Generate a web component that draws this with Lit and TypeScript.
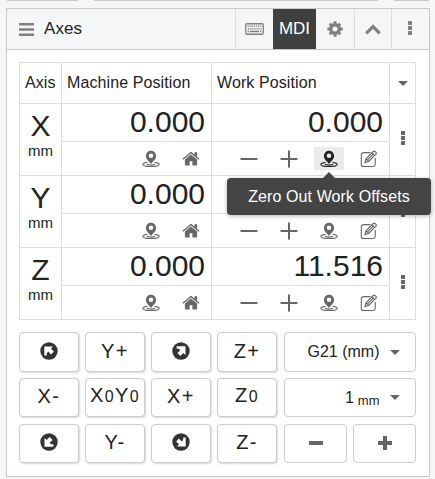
import { LitElement, html, svg, css } from "lit";
import { customElement } from "lit/decorators.js";

const pin = html`<svg class="ic" width="18" height="18" viewBox="0 0 18 18"><path fill="currentColor" fill-rule="evenodd" d="M9 .8a5.100 5.100 0 0 0-5.100 5.100C3.900 9.100 7 11 9 14.100 11 11 14.100 9.100 14.100 5.900A5.100 5.100 0 0 0 9 .8zM9 3.500a2.300 2.300 0 1 1 0 4.600 2.300 2.300 0 0 1 0-4.600z"/><path d="M5.500 12.400C2.800 12.800.8 13.500.8 14.500.8 15.700 4.300 16.500 9 16.500s8.200-.8 8.200-2c0-1-2-1.700-4.700-2.100" fill="none" stroke="currentColor" stroke-width="1.100"/><path d="M5 14.300q4 1.500 8 0" fill="none" stroke="currentColor" stroke-width="1.200"/></svg>`;
const home = html`<svg class="ic" width="18" height="16" viewBox="0 0 18 16"><path fill="currentColor" d="M9 3.400 2.900 8.500v5.300c0 .5.300.8.800.8h3.900v-4.400h2.800v4.400h3.900c.5 0 .8-.3.800-.8V8.500z"/><path fill="currentColor" d="M17.500 7.700 15.100 5.700V1.200h-2.500v2.400L10 1.400c-.6-.5-1.400-.5-2 0L.5 7.700l.8 1L9 2.400l7.700 6.300z"/></svg>`;
const minus = html`<svg class="ic" width="18" height="18" viewBox="0 0 18 18"><path fill="currentColor" d="M.5 8h17v2H.5z"/></svg>`;
const plus = html`<svg class="ic" width="18" height="18" viewBox="0 0 18 18"><path fill="currentColor" d="M.5 8H8V.5h2V8h7.500v2H10v7.500H8V10H.5z"/></svg>`;
const edit = html`<svg class="ic" width="18" height="18" viewBox="0 0 18 18" fill="none" stroke="currentColor" stroke-width="1.100"><path d="M10.500 2.600H3.600a2.300 2.300 0 0 0-2.300 2.300v9.300a2.300 2.300 0 0 0 2.300 2.300h9.300a2.300 2.300 0 0 0 2.300-2.300V8"/><path d="M5 12.500 6 8.800 13.300 1.500q.9-.8 1.800 0l.9.9q.8.900 0 1.800L8.700 11.500zM12 2.800l2.700 2.700M6 8.800l2.700 2.700M7.300 10.200l6-6"/></svg>`;
const caret = html`<svg class="caret" width="10" height="5" viewBox="0 0 10 5"><path fill="currentColor" d="M0 0h10L5 5z"/></svg>`;
const dots = html`<svg width="4" height="14" viewBox="0 0 4 14"><path fill="currentColor" d="M.5 0h3q.5 0 .5.500v3q0 .5-.5.500h-3Q0 4 0 3.500v-3Q0 0 .5 0zM.5 5h3q.5 0 .5.500v3q0 .5-.5.500h-3Q0 9 0 8.500v-3Q0 5 .5 5zM.5 10h3q.5 0 .5.500v3q0 .5-.5.500h-3q-.5 0-.5-.5v-3q0-.5.500-.5z"/></svg>`;
const arrow = (deg: number) => html`<svg class="arrow" width="18" height="18" viewBox="0 0 18 18"><circle cx="9" cy="9" r="8.700" fill="#333"/>${svg`<path transform="rotate(${deg} 9 9)" fill="#fff" d="M4.300 4.500H13L11 6.700l2.900 2.900-2.900 3L8.300 9.600 6.800 11.200V13.400H4.300z"/>`}</svg>`;

@customElement("app-root")
export class AppRoot extends LitElement {
  static styles = css`
    :host { display: block; position: relative; width: 435px; height: 479px; overflow: hidden; background: #f5f6f8; color: #222; font: 16px/20px "Liberation Sans", Arial, sans-serif; }
    * { box-sizing: border-box; }
    svg { display: block; flex: none; }
    .above { display: flex; gap: 16px; height: 1px; padding: 0 0 0 7px; }
    .above i { background: #c8c8c8; height: 1px; width: 71px; }
    .above i:nth-child(2) { width: 284px; }
    .above i:nth-child(3) { width: 35px; }
    .panel { margin: 7px 5px 0 6px; height: 469px; border: 1px solid #c8c8c8; background: #fff; }
    .head { display: flex; height: 41px; background: #f5f6f8; border-bottom: 1px solid #c8c8c8; color: #222; font-size: 17px; }
    .title { flex: 1; display: flex; align-items: center; gap: 10px; padding-left: 12px; letter-spacing: .1px; }
    .title svg, .tool { color: #808080; }
    .tool { display: flex; align-items: center; justify-content: center; border-left: 1px solid #ddd; width: 37px; }
    .tool.kb { width: 38px; }
    .tool.mdi { background: #404040; color: #fff; width: 43px; border: 0; }
    .tool.gear { width: 38px; border: 0; }
    .tool.last { width: 38px; padding: 0 1px 2px 0; }
    .table { margin: 12px 13px 0 12px; width: 397px; display: grid; grid-template-columns: 42px 150px 178px 27px; grid-template-rows: 41px repeat(3, 38px 34px); border-top: 1px solid #ddd; }
    .c { border-left: 1px solid #ddd; border-bottom: 1px solid #ddd; }
    .th { display: flex; align-items: center; padding-left: 5px; white-space: nowrap; letter-spacing: .1px; }
    .end { border-right: 1px solid #ddd; color: #666; display: flex; align-items: center; justify-content: center; }
    .end .caret { margin: 0; }
    .menu, .axis { grid-row: span 2; }
    .menu { padding: 0 0 3px 1px; }
    .axis { text-align: center; padding-top: 5px; }
    .axis b { display: block; font-weight: 400; font-size: 30px; line-height: 34px; }
    .axis span { display: block; font-size: 15px; line-height: 16px; }
    .num { font-size: 30px; line-height: 35px; text-align: right; padding-right: 6px; }
    .acts { display: flex; justify-content: flex-end; align-items: center; padding-right: 5px; gap: 10px; color: #666; }
    .acts span { width: 30px; height: 23px; display: flex; align-items: center; justify-content: center; }
    .acts .on { background: #ebebeb; color: #222; }
    .pad { display: grid; grid-template-columns: 60px 60px 60px 61px 63px 63px; column-gap: 6px; grid-template-rows: 40px 40px 39px; row-gap: 6px; margin: 12px 12px 0; }
    .b { height: 39px; border: 1px solid #ccc; border-radius: 4px; background: #fff; display: flex; align-items: center; justify-content: center; white-space: nowrap; }
    .b:nth-child(-n+5) { height: 40px; }
    .jog { width: 60px; box-shadow: 1px 1px 2px rgba(0,0,0,.15); font-size: 20px; letter-spacing: 1.4px; padding-bottom: 3px; }
    .jog small { font-size: 16px; }
    .wide { grid-column: span 2; justify-content: flex-end; padding-right: 15px; color: #222; }
    .wide sub { font-size: 13px; line-height: 10px; margin: 7px 0 0 4px; vertical-align: baseline; }
    .caret { color: #666; margin-left: 10.5px; }
    .grey { color: #666; padding-bottom: 2px; }
    .tip { position: absolute; left: 227px; top: 178px; width: 204px; height: 37px; border-radius: 4px; background: #444; color: #fff; display: flex; align-items: center; justify-content: center; box-shadow: 0 1px 4px rgba(0,0,0,.3); white-space: nowrap; letter-spacing: .1px; }
    .tip::before { content: ""; position: absolute; top: -6px; left: 96px; border: 6px solid transparent; border-top: 0; border-bottom-color: #444; }
  `;

  row(axis: string, work: string, active = false) {
    return html`
      <div class="c axis"><b>${axis}</b><span>mm</span></div>
      <div class="c num">0.000</div>
      <div class="c num">${work}</div>
      <div class="c end menu">${dots}</div>
      <div class="c acts"><span>${pin}</span><span>${home}</span></div>
      <div class="c acts"><span>${minus}</span><span>${plus}</span><span class=${active ? "on" : ""}>${pin}</span><span>${edit}</span></div>`;
  }

  render() {
    return html`
      <div class="above"><i></i><i></i><i></i></div>
      <div class="panel">
        <div class="head">
          <div class="title"><svg width="15" height="13" viewBox="0 0 15 13"><path fill="currentColor" d="M0 0h15v2.500H0zM0 5.250h15v2.500H0zM0 10.500h15V13H0z"/></svg>Axes</div>
          <div class="tool kb"><svg width="19" height="12" viewBox="0 0 19 12"><rect x=".75" y=".75" width="17.500" height="10.500" rx="1" fill="none" stroke="currentColor" stroke-width="1.300"/><path stroke="currentColor" stroke-width="1.300" stroke-dasharray="1.300 .8" d="M2.500 3.200h14M3 5.800h13.500"/><path stroke="currentColor" stroke-width="1.500" d="M2.500 8.600H4M5 8.600h9M15 8.600h1.500"/></svg></div>
          <div class="tool mdi">MDI</div>
          <div class="tool gear"><svg width="16" height="16" viewBox="-8 -8 16 16"><circle r="4.200" fill="none" stroke="currentColor" stroke-width="3.400"/><path stroke="currentColor" stroke-width="3" d="M0-7.700V-4.500M0 7.700V4.500M-7.700 0H-4.500M7.700 0H4.500M-5.300-5.300-3.500-3.500M5.300 5.300 3.500 3.500M-5.300 5.300-3.500 3.500M5.300-5.300 3.500-3.500"/></svg></div>
          <div class="tool"><svg width="16" height="11" viewBox="0 0 16 11"><path d="M1.300 9.300 8 2.600l6.700 6.700" fill="none" stroke="currentColor" stroke-width="3.300"/></svg></div>
          <div class="tool last">${dots}</div>
        </div>
        <div class="table">
          <div class="c th">Axis</div><div class="c th">Machine Position</div><div class="c th">Work Position</div><div class="c end">${caret}</div>
          ${this.row("X", "0.000", true)}${this.row("Y", "0.000")}${this.row("Z", "11.516")}
        </div>
        <div class="pad">
          <div class="b jog">${arrow(0)}</div><div class="b jog"><span>Y+</span></div><div class="b jog">${arrow(90)}</div><div class="b jog"><span>Z+</span></div>
          <div class="b wide">G21 (mm)${caret}</div>
          <div class="b jog"><span>X-</span></div><div class="b jog"><span>X<small>0</small>Y<small>0</small></span></div><div class="b jog"><span>X+</span></div><div class="b jog"><span>Z<small>0</small></span></div>
          <div class="b wide">1<sub>mm</sub>${caret}</div>
          <div class="b jog">${arrow(270)}</div><div class="b jog"><span>Y-</span></div><div class="b jog">${arrow(180)}</div><div class="b jog"><span>Z-</span></div>
          <div class="b grey"><svg width="14" height="14" viewBox="0 0 14 14"><path fill="currentColor" d="M0 5h14v4H0z"/></svg></div>
          <div class="b grey"><svg width="14" height="14" viewBox="0 0 14 14"><path fill="currentColor" d="M0 5h5V0h4v5h5v4H9v5H5V9H0z"/></svg></div>
        </div>
      </div>
      <div class="tip">Zero Out Work Offsets</div>`;
  }
}
